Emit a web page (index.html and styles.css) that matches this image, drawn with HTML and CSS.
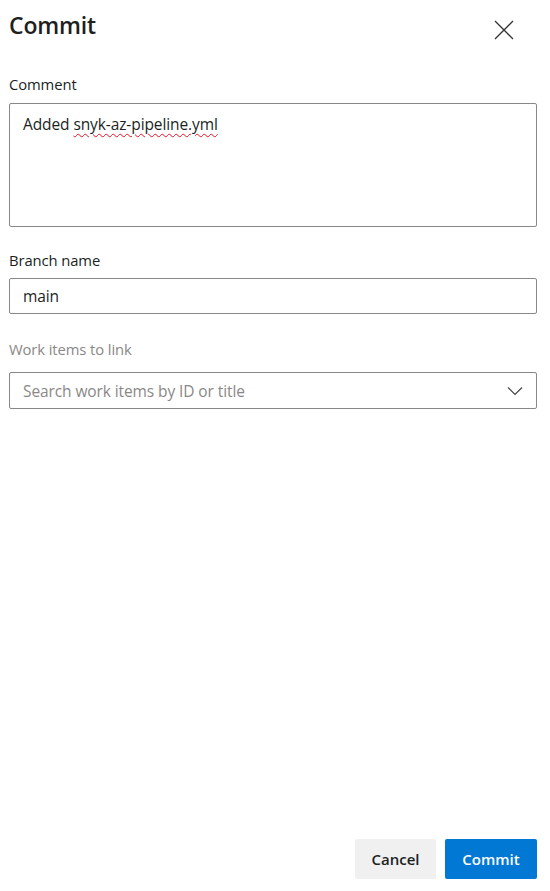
FILE: index.html
```html
<!DOCTYPE html>
<html>
<head>
<meta charset="utf-8">
<link rel="stylesheet" href="styles.css">
</head>
<body>
<div class="panel">
  <div class="header">
    <h1 class="title">Commit</h1>
    <button class="close" aria-label="Close">
      <svg width="20" height="20" viewBox="0 0 20 20"><path d="M1 1 L19 19 M19 1 L1 19" stroke="#333" stroke-width="1.3" fill="none"/></svg>
    </button>
  </div>
  <div class="field comment">
    <label class="label">Comment</label>
    <div class="textarea">Added <span class="spell">snyk-az-pipeline.yml</span></div>
  </div>
  <div class="field branch">
    <label class="label">Branch name</label>
    <div class="input">main</div>
  </div>
  <div class="field work">
    <label class="label muted">Work items to link</label>
    <div class="input dropdown">
      <span class="placeholder">Search work items by ID or title</span>
      <svg width="16" height="10" viewBox="0 0 16 10"><path d="M1 1.5 L8 8.5 L15 1.5" stroke="#444" stroke-width="1.2" fill="none"/></svg>
    </div>
  </div>
  <div class="spacer"></div>
  <div class="footer">
    <button class="btn secondary">Cancel</button>
    <button class="btn primary">Commit</button>
  </div>
</div>
</body>
</html>
```
FILE: styles.css
```css
html, body { margin: 0; padding: 0; background: #fff; }
body { font-family: "Open Sans", "Noto Sans", sans-serif; color: #201f1e; }
.panel { display: flex; flex-direction: column; height: 891px; padding: 0 13px 0 9px; box-sizing: border-box; }
.header { display: flex; justify-content: space-between; align-items: flex-start; height: 56px; }
.title { margin: 9px 0 0; font-size: 23px; font-weight: 600; letter-spacing: -0.2px; }
.close { border: 0; background: none; padding: 0; margin: 20px 23px 0 0; width: 20px; height: 20px; }
.field { display: flex; flex-direction: column; }
.label { font-size: 14.8px; line-height: 20px; margin-bottom: 8px; letter-spacing: -0.1px; }
.comment { margin-top: 18px; }
.comment .label { margin-bottom: 9px; }
.branch { margin-top: 23px; }
.work { margin-top: 25px; }
.work .label { margin-bottom: 13px; }
.label.muted { color: #8a8886; }
.textarea, .input { border: 1px solid #8a8886; border-radius: 2px; box-sizing: border-box; font-size: 15.5px; padding: 0 13px; letter-spacing: -0.1px; }
.textarea { height: 124px; padding-top: 9px; line-height: 22px; }
.spell { text-decoration: underline wavy #e81123; text-decoration-thickness: 1px; text-underline-offset: 3px; }
.input { height: 36px; display: flex; align-items: center; }
.dropdown { height: 37px; justify-content: space-between; padding-right: 13px; }
.placeholder { color: #8a8886; }
.spacer { flex: 1; }
.footer { display: flex; justify-content: flex-end; gap: 9px; margin-bottom: 12px; }
.btn { border: 0; border-radius: 2px; height: 40px; font-family: "Open Sans", sans-serif; font-size: 15px; font-weight: 600; padding: 0 15px; }
.secondary { background: #f0f0f0; color: #201f1e; width: 81px; }
.primary { background: #0078d4; color: #fff; width: 92px; }
```
